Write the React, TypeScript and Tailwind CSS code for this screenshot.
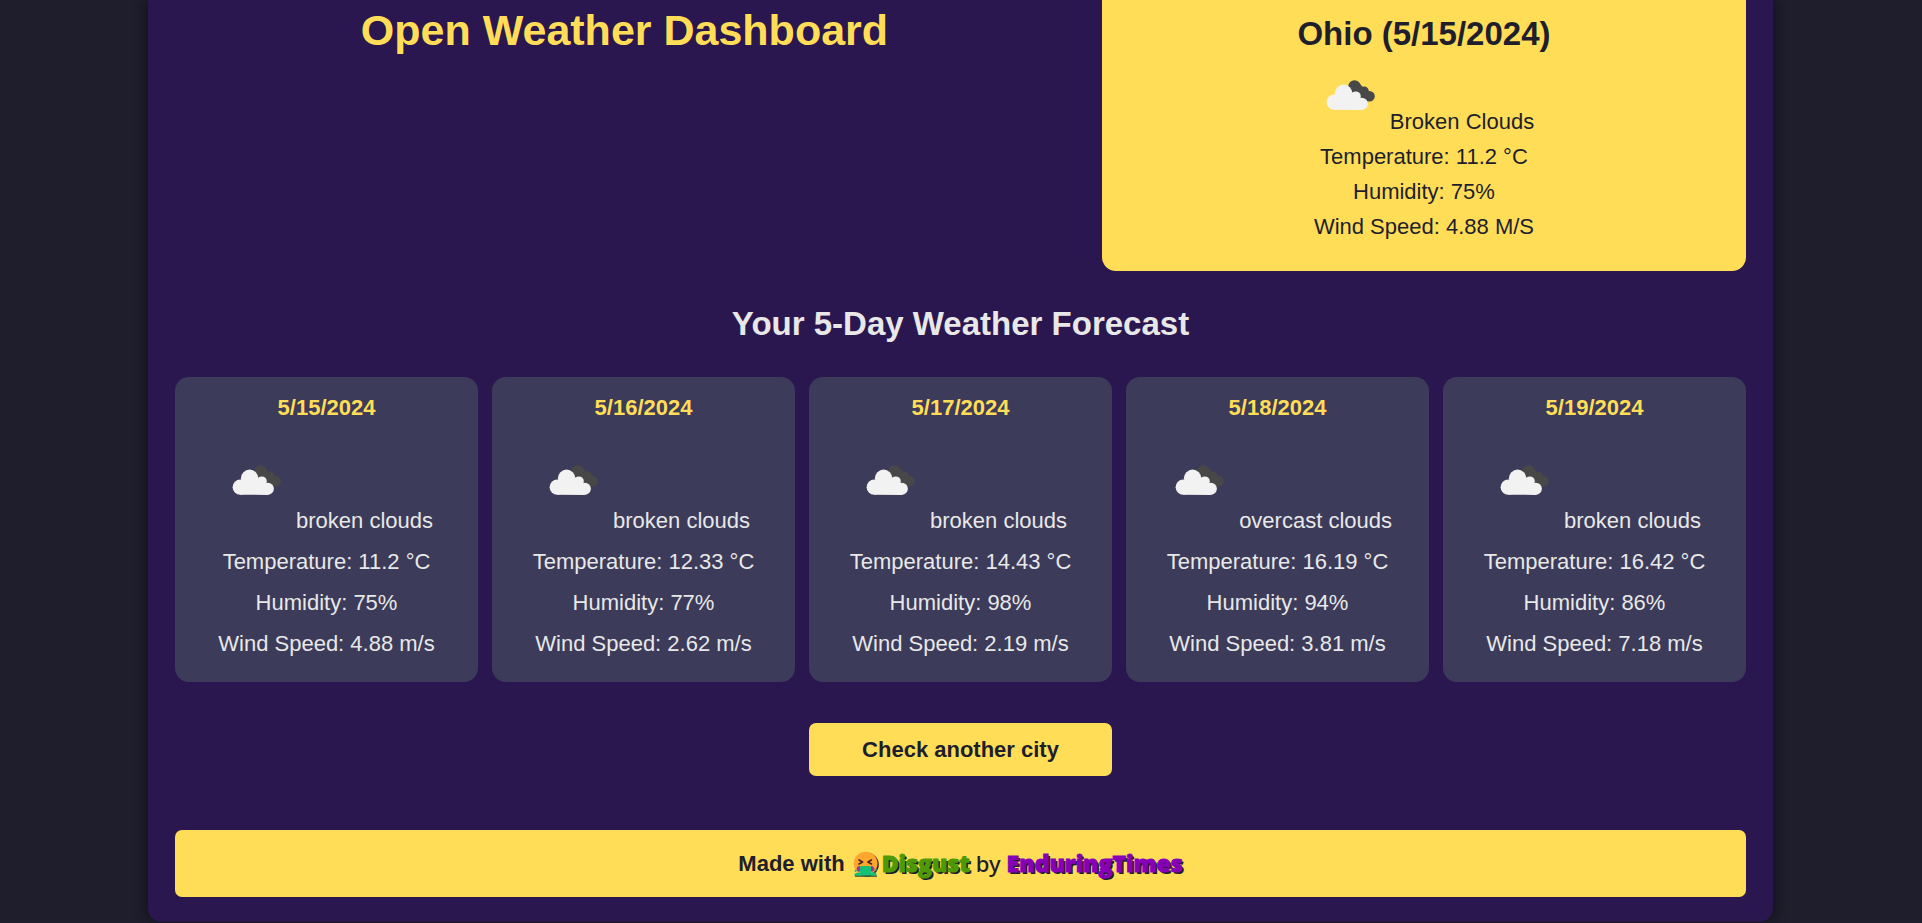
type Day = { date: string; sky: string; temp: string; humidity: string; wind: string };

const days: Day[] = [
  { date: "5/15/2024", sky: "broken clouds", temp: "11.2", humidity: "75", wind: "4.88" },
  { date: "5/16/2024", sky: "broken clouds", temp: "12.33", humidity: "77", wind: "2.62" },
  { date: "5/17/2024", sky: "broken clouds", temp: "14.43", humidity: "98", wind: "2.19" },
  { date: "5/18/2024", sky: "overcast clouds", temp: "16.19", humidity: "94", wind: "3.81" },
  { date: "5/19/2024", sky: "broken clouds", temp: "16.42", humidity: "86", wind: "7.18" },
];

function CloudIcon() {
  return (
    <svg viewBox="0 0 70 70" className="inline-block size-[70px] align-baseline" aria-hidden="true">
      <g fill="#484848">
        <circle cx="40.5" cy="27.500" r="6.2" />
        <circle cx="50.3" cy="32.2" r="4.6" />
        <circle cx="55.6" cy="37.3" r="5.2" />
        <path d="M37 32.500L45 24L59 38.500L54 42.500L47 39.500Z" />
      </g>
      <g fill="#f2f2f2">
        <circle cx="20.2" cy="43.200" r="7.6" />
        <circle cx="29.600" cy="34.300" r="8.7" />
        <circle cx="41.800" cy="37.400" r="5" />
        <circle cx="47.800" cy="44.800" r="6.100" />
        <path d="M20.200 50.800L20.800 37.600L30.800 29.600L41.800 35.600L46.800 39.600L47.800 50.900Z" />
      </g>
    </svg>
  );
}

function SickFace() {
  return (
    <svg viewBox="0 0 26 26" className="inline-block size-[26px]" role="img" aria-label="Disgusted face">
      <circle cx="14" cy="13.6" r="11.800" fill="#2b2430" />
      <circle cx="12.6" cy="12.600" r="11.900" fill="#ffa62e" />
      <g fill="none" stroke="#40262a" strokeWidth="1.6" strokeLinecap="round" strokeLinejoin="round">
        <path d="M6 9l3.600 2-3.600 2M18.500 9l-3.600 2 3.600 2" />
      </g>
      <path d="M7 15a3 3 0 0 0-2 5.500h3zM18 15a3 3 0 0 1 2 5.500h-3z" fill="#a0309c" />
      <path d="M1.500 24.800v-2l3-1.300 2.500.5V16.500a1.500 1.500 0 0 1 1.500-1.500h8a1.500 1.500 0 0 1 1.500 1.500V22l2.500-1 3 1.600v2.200z" fill="#12c176" />
      <circle cx="2.600" cy="19.800" r="1.100" fill="#12c176" />
      <circle cx="22.600" cy="18.800" r="1.100" fill="#12c176" />
      <path d="M2 25.200h22" stroke="#1e3a34" strokeWidth="1" />
    </svg>
  );
}

export default function App() {
  return (
    <div className="bg-[#1e1e2c] pr-px pb-px font-['Liberation_Sans',Arial,sans-serif] text-[22px] text-[#e8e8e8]">
      <main className="mx-auto w-full max-w-[1625px] rounded-b-[14px] bg-[#2b1750] px-[27px] pb-[25px] shadow-[0_0_14px_rgba(0,0,0,0.5)]">
        <header className="flex gap-7">
          <h1 className="flex-1 pt-1 text-center text-[43px] leading-[52px] font-bold text-[#ffdd57]">
            Open Weather Dashboard
          </h1>
          <section className="w-[41%] rounded-b-[14px] bg-[#ffdd57] pt-[14px] pb-[27px] text-center leading-[35px] text-[#1e1e2c]">
            <h2 className="text-[33px] leading-[40px] font-bold">Ohio (5/15/2024)</h2>
            <p className="mt-[5px]">
              <CloudIcon /> Broken Clouds
            </p>
            <p>Temperature: 11.2 °C</p>
            <p>Humidity: 75%</p>
            <p>Wind Speed: 4.88 M/S</p>
          </section>
        </header>

        <h2 className="mt-[33px] text-center text-[33px] leading-[40px] font-bold">Your 5-Day Weather Forecast</h2>

        <ul className="mt-[33px] grid grid-cols-5 gap-[14px]">
          {days.map((d) => (
            <li key={d.date} className="flex flex-col gap-[7px] rounded-[14px] bg-[#3c3b59] pt-[14px] pb-[21px] text-center leading-[34px]">
              <h3 className="font-bold text-[#ffdd57]">{d.date}</h3>
              <p className="mt-3 [&>svg]:mb-[14px]">
                <CloudIcon /> {d.sky}
              </p>
              <p>Temperature: {d.temp} °C</p>
              <p>Humidity: {d.humidity}%</p>
              <p>Wind Speed: {d.wind} m/s</p>
            </li>
          ))}
        </ul>

        <div className="mt-[41px] grid grid-cols-5 gap-[14px]">
          <button type="button" className="col-start-3 h-[53px] rounded-[7px] bg-[#ffdd57] font-bold text-[#1e1e2c]">
            Check another city
          </button>
        </div>

        <footer className="mt-[54px] flex h-[67px] items-center justify-center rounded-[7px] bg-[#ffdd57] font-bold text-[#1e1e2c]">
          <p className="flex items-center">
            <span>Made with</span>
            <span className="ml-2 flex items-center gap-[3px] font-['Open_Sans',sans-serif] text-[23px] font-extrabold text-[#4e9a06] [-webkit-text-stroke:1px_#4e9a06] [text-shadow:2px_2px_#1e1e2c]">
              <SickFace />
              Disgust
            </span>
            <span className="mx-[6px] font-['Noto_Sans',sans-serif] font-medium">by</span>
            <a href="#" className="font-['Open_Sans',sans-serif] text-[23px] font-extrabold text-[#8600b8] [-webkit-text-stroke:1px_#8600b8] [text-shadow:2px_2px_#1e1e2c]">
              EnduringTimes
            </a>
          </p>
        </footer>
      </main>
    </div>
  );
}
